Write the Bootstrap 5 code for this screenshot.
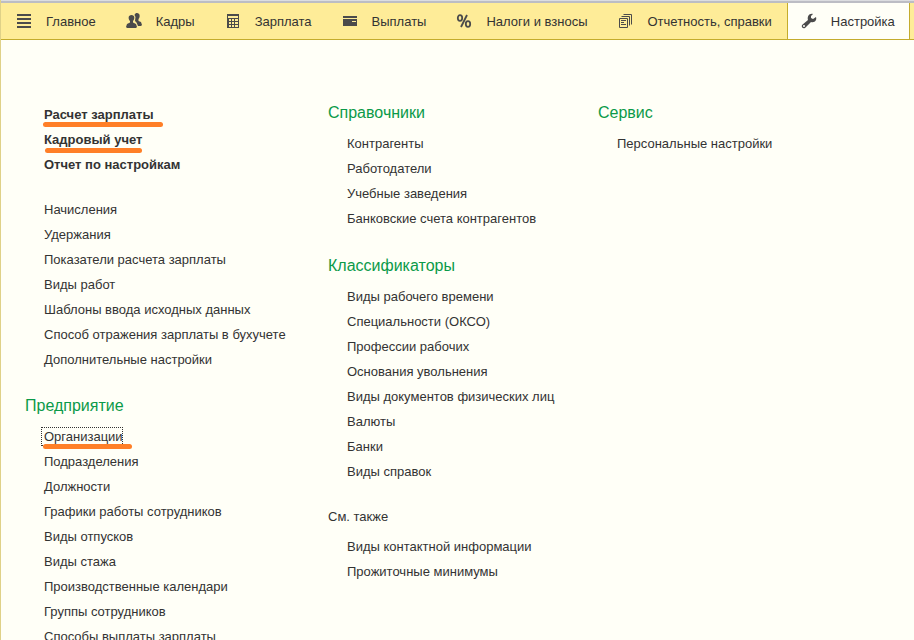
<!DOCTYPE html>
<html lang="ru">
<head>
<meta charset="utf-8">
<meta name="viewport" content="width=device-width, initial-scale=1">
<title>Настройка</title>
<link href="https://cdn.jsdelivr.net/npm/bootstrap@5.3.0/dist/css/bootstrap.min.css" rel="stylesheet">
<style>
body{font-family:"Liberation Sans",Arial,sans-serif;font-size:13px;line-height:25px;color:#333;background:#fffff7}
.page{border-left:1px solid #dfd188;overflow:hidden}
.topline{height:3px;background:linear-gradient(#dcdde0 1px,#bcbdc4 1px)}
.sections{background:#feec98;border-bottom:1px solid #c4ac2c;height:37px}
.section-link{color:#333;text-decoration:none;padding:0 15px;white-space:nowrap}
.section-link svg{width:16px;height:16px;margin-right:14px;flex:none;fill:#4b4b4b}
.section-link.active{background:#fffff7;border:solid #c4ac2c;border-width:0 1px;padding:0 14px 0 13px}
.menu{padding:61px 24px 0;height:calc(100vh - 40px);overflow:hidden}
.menu-a{width:303px;padding-top:1px}
.menu-b{width:270px}
.menu a{color:#333;text-decoration:none;white-space:nowrap}
.menu ul{padding-left:19px;margin-bottom:23px}
.menu .primary{margin-bottom:20px}
.menu-a ul{margin-bottom:22px}
.menu li{height:25px}
.menu h2{font-size:16px;line-height:24px;font-weight:400;color:#0b9a49;margin-bottom:6px}
.menu .also{font-size:13px;color:#333;margin:-2px 0 5px}
.marked{line-height:15px}
.marked::after{content:"";position:absolute;left:-1px;right:-10px;bottom:-5px;height:5px;border-radius:3px;background:#ff7f27}
.marked.short::after{left:1px;right:0;bottom:-6px}
.marked.focused::after{right:-9px}
.focused::before{content:"";position:absolute;inset:-2px 0 -2px -3px;border:1px dotted #333}
</style>
<script src="https://cdn.jsdelivr.net/npm/bootstrap@5.3.0/dist/js/bootstrap.bundle.min.js"></script>
</head>
<body>
<div class="page">
<div class="topline"></div>
<nav class="sections d-flex" aria-label="Разделы">
<a class="section-link d-flex align-items-center" href="#"><svg viewBox="0 0 16 16"><path d="M1 1h14v2H1zM1 5h14v2H1zM1 9h14v2H1zM1 13h14v2H1z"/></svg>Главное</a>
<a class="section-link d-flex align-items-center" href="#"><svg viewBox="0 0 16 16"><path d="M11 0c3 0 3.500 4 1.500 6v2l2.500 1 1 3-1 1h-3l-1.500-3.500L9 8l.5-4L8.500 2C9 .6 10 0 11 0z"/><path d="M5.500 2c3.500 0 3.500 4 1.500 6v1.500l3 1.500 1 3-1 1H1l-1-1 1-3 3-1.500V8C2 6 2 2 5.500 2z"/></svg>Кадры</a>
<a class="section-link d-flex align-items-center" href="#"><svg viewBox="0 0 16 16"><path fill-rule="evenodd" d="M2 1h12v14H2zM3 3v2h10V3zM4 6v2h2V6zm3 0v2h2V6zm3 0v2h3V6zM4 9v2h2V9zm3 0v2h2V9zm3 0v2h3V9zM4 12v2h2v-2zm3 0v2h2v-2zm3 0v2h3v-2z"/></svg>Зарплата</a>
<a class="section-link d-flex align-items-center" href="#"><svg viewBox="0 0 16 16"><path fill-rule="evenodd" d="M1 3h14v2H1zM1 6h14v7H1zm9 2v1h4V8z"/></svg>Выплаты</a>
<a class="section-link d-flex align-items-center" href="#"><svg viewBox="0 0 16 16"><g fill="none" stroke="#4b4b4b" stroke-width="1.800"><ellipse cx="4" cy="5" rx="2.200" ry="2.800"/><ellipse cx="12" cy="11" rx="2.200" ry="2.800"/><path d="M11 2 5 14"/></g></svg>Налоги и взносы</a>
<a class="section-link d-flex align-items-center" href="#"><svg viewBox="0 0 16 16"><path fill="none" stroke="#4b4b4b" d="M1.500 5.500h8v9h-8zM3.500 3.500h8v9M5.500 1.500h8v10M3 7.500h5M3 9.500h3M3 11.500h5"/></svg>Отчетность, справки</a>
<a class="section-link active d-flex align-items-center" href="#" aria-current="page"><svg viewBox="0 0 16 16"><path d="M12 1 10 3v2l2 1 3-2c1 3-1 6-5 5l-6 6c-2 1-4-1-3-3l6-5C6 4 8 0 12 1zM3 12a1 1 0 1 0 0 2 1 1 0 0 0 0-2z" fill-rule="evenodd"/></svg>Настройка</a>
</nav>
<main class="menu d-flex">
<div class="menu-a flex-shrink-0">
<ul class="list-unstyled primary fw-bold">
<li><a class="marked position-relative d-inline-block" href="#">Расчет зарплаты</a></li>
<li><a class="marked short position-relative d-inline-block" href="#">Кадровый учет</a></li>
<li><a href="#">Отчет по настройкам</a></li>
</ul>
<ul class="list-unstyled">
<li><a href="#">Начисления</a></li>
<li><a href="#">Удержания</a></li>
<li><a href="#">Показатели расчета зарплаты</a></li>
<li><a href="#">Виды работ</a></li>
<li><a href="#">Шаблоны ввода исходных данных</a></li>
<li><a href="#">Способ отражения зарплаты в бухучете</a></li>
<li><a href="#">Дополнительные настройки</a></li>
</ul>
<h2>Предприятие</h2>
<ul class="list-unstyled">
<li><a class="marked focused position-relative d-inline-block" href="#">Организации</a></li>
<li><a href="#">Подразделения</a></li>
<li><a href="#">Должности</a></li>
<li><a href="#">Графики работы сотрудников</a></li>
<li><a href="#">Виды отпусков</a></li>
<li><a href="#">Виды стажа</a></li>
<li><a href="#">Производственные календари</a></li>
<li><a href="#">Группы сотрудников</a></li>
<li><a href="#">Способы выплаты зарплаты</a></li>
</ul>
</div>
<div class="menu-b flex-shrink-0">
<h2>Справочники</h2>
<ul class="list-unstyled">
<li><a href="#">Контрагенты</a></li>
<li><a href="#">Работодатели</a></li>
<li><a href="#">Учебные заведения</a></li>
<li><a href="#">Банковские счета контрагентов</a></li>
</ul>
<h2>Классификаторы</h2>
<ul class="list-unstyled">
<li><a href="#">Виды рабочего времени</a></li>
<li><a href="#">Специальности (ОКСО)</a></li>
<li><a href="#">Профессии рабочих</a></li>
<li><a href="#">Основания увольнения</a></li>
<li><a href="#">Виды документов физических лиц</a></li>
<li><a href="#">Валюты</a></li>
<li><a href="#">Банки</a></li>
<li><a href="#">Виды справок</a></li>
</ul>
<h2 class="also">См. также</h2>
<ul class="list-unstyled">
<li><a href="#">Виды контактной информации</a></li>
<li><a href="#">Прожиточные минимумы</a></li>
</ul>
</div>
<div>
<h2>Сервис</h2>
<ul class="list-unstyled">
<li><a href="#">Персональные настройки</a></li>
</ul>
</div>
</main>
</div>
</body>
</html>
